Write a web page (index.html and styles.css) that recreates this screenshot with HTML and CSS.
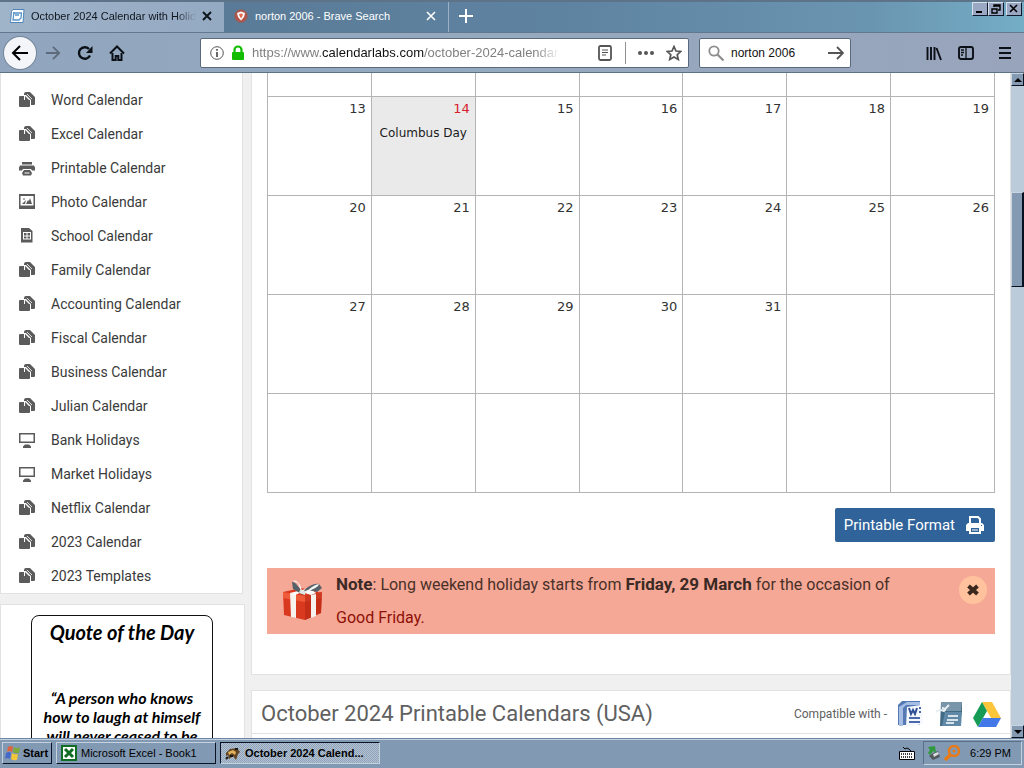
FILE: index.html
```html
<!DOCTYPE html>
<html lang="en">
<head>
<meta charset="utf-8">
<meta name="viewport" content="width=device-width, initial-scale=1">
<title>October 2024 Calendar with Holidays</title>
<link rel="stylesheet" href="styles.css">
</head>
<body>
<svg class="sprites" aria-hidden="true">
  <symbol id="i-copy" viewBox="0 1 16 16"><path fill="#5b5b5b" d="M5 3q0-2 2-2h4l5 5v7q0 1-1 1h-3V9L7 4H5z"/><path fill="#5b5b5b" d="M0 6q0-1 1-1h4v4h6v6q0 1-1 1H1q-1 0-1-1z"/><path fill="#5b5b5b" d="M6 5l4 4H6z"/><path d="M8 3l5 5" stroke="#fff" stroke-width=".8"/></symbol>
  <symbol id="i-print" viewBox="0 0 16 16"><path fill="#5b5b5b" d="M3 2h10v2.500H3zM1 5.500h14l1 2v3h-3L12 9H4l-1 1.500H0v-3z"/><path fill="#5b5b5b" d="M5 10h6l2 3-1 2.500H4L3 13z"/><path fill="#fff" d="M5.500 12.500h5v1h-5z"/></symbol>
  <symbol id="i-photo" viewBox="0 0 16 16"><path fill="#5b5b5b" fill-rule="evenodd" d="M0 0h16v15H0zM1.500 2v9.500h13V2z"/><path fill="#5b5b5b" d="M3 10l4-4-1 4zM7 10l2-4 1 1 1-3 2 6zM4 4.500h2v1H4z"/></symbol>
  <symbol id="i-school" viewBox="0 2 16 16"><path fill="#5b5b5b" fill-rule="evenodd" d="M2 2h8l3.500 3v11.500H2zM4 6v7.500h8V6zM5 7h2.500v2.500H5zM8.500 7H11v2.500H8.500zM5 10.500h2.500v2H5zM8.500 10.500H11v2H8.500z"/></symbol>
  <symbol id="i-screen" viewBox="0 0 16 16"><path fill="#5b5b5b" fill-rule="evenodd" d="M0 1h16v10H0zM1.500 2.500v7h13v-7zM6 12.500h4l2 2V16H4v-1.500z"/></symbol>
</svg>

<header class="browser">
  <div class="tabs">
    <div class="tab tab-active">
      <svg class="s16" viewBox="0 0 16 16"><path d="M4 1.500h11l-1 13H1.500l1-11z" fill="#fff" stroke="#4e84b8"/><path d="M4 5h9M5 4l-1 8h6l2-2 .5-5M6 7h4" fill="none" stroke="#5a93c6" stroke-width="1.300"/></svg>
      <span class="tab-title">October 2024 Calendar with Holidays</span>
      <button class="tab-close" aria-label="Close tab"><svg class="s10" viewBox="0 0 10 10"><path d="M1 1l8 8M9 1L1 9" stroke="currentColor" stroke-width="2"/></svg></button>
    </div>
    <div class="tab tab-back">
      <svg class="s16" viewBox="0 0 16 16"><circle cx="8" cy="8" r="6.500" fill="#b3544b" stroke="#7a6a70"/><path d="M8 3.500l4 1.500-1 4-3 3.500L5 9 4 5z" fill="#fff"/><path d="M8 5.500l2 .5-.8 2.500L8 10.500 6.800 8.500 6 6z" fill="#e56a52"/></svg>
      <span class="tab-title">norton 2006 - Brave Search</span>
      <button class="tab-close" aria-label="Close tab"><svg class="s10" viewBox="0 0 10 10"><path d="M1 1l8 8M9 1L1 9" stroke="currentColor" stroke-width="1.600"/></svg></button>
    </div>
    <button class="new-tab" aria-label="New tab"><svg class="s16" viewBox="0 0 16 16"><path d="M8 1v14M1 8h14" stroke="#fff" stroke-width="2"/></svg></button>
    <div class="window-buttons">
      <button class="win-btn" aria-label="Minimize"><svg class="s10" viewBox="0 0 10 10"><path d="M1 8h6" stroke="#000" stroke-width="2"/></svg></button>
      <button class="win-btn" aria-label="Restore"><svg class="s10" viewBox="0 0 10 10"><path d="M3 3V1h6v5H7M3 2h6M1 5h5v4H1zM1 5h5" fill="none" stroke="#000" stroke-width="1.400"/></svg></button>
      <button class="win-btn win-close" aria-label="Close"><svg class="s10" viewBox="0 0 10 10"><path d="M1 1l7 7M8 1L1 8" stroke="#000" stroke-width="1.600"/></svg></button>
    </div>
  </div>
  <div class="toolbar">
    <button class="nav-btn back" aria-label="Back"><svg class="s18" viewBox="0 0 18 18"><path d="M17 9H2M9 2L2 9l7 7" fill="none" stroke="#000" stroke-width="2"/></svg></button>
    <button class="nav-btn" aria-label="Forward"><svg class="s16" viewBox="0 0 18 18"><path d="M1 9h15M9 2l7 7-7 7" fill="none" stroke="#5d6b7d" stroke-width="2"/></svg></button>
    <button class="nav-btn" aria-label="Reload"><svg class="s16" viewBox="0 0 16 16"><path d="M13 10.500A5.800 5.800 0 1 1 12 4" fill="none" stroke="#0b1017" stroke-width="2.400"/><path d="M15.500 1v7H9z" fill="#0b1017"/></svg></button>
    <button class="nav-btn" aria-label="Home"><svg class="s16" viewBox="0 0 16 16"><path d="M1 8.500l7-7 7 7" fill="none" stroke="#0b1017" stroke-width="2"/><path d="M3.500 8v7h3.200v-4h2.600v4h3.200V8" fill="none" stroke="#0b1017" stroke-width="2"/></svg></button>
    <div class="urlbar">
      <svg class="s16" viewBox="0 0 16 16"><circle cx="8" cy="8" r="6.300" fill="none" stroke="#555"/><path d="M8 7v5M8 4v1.800" stroke="#444" stroke-width="1.600"/></svg>
      <svg class="s16" viewBox="0 0 16 16"><path d="M4.500 8V5a3.500 3.500 0 0 1 7 0v3" fill="none" stroke="#12bc00" stroke-width="2.200"/><rect x="2" y="7" width="12" height="8" rx="1" fill="#12bc00"/></svg>
      <a class="url" href="#">https://www.<span class="domain">calendarlabs.com</span>/october-2024-calendar</a>
      <svg class="s16" viewBox="0 0 16 16"><rect x="2" y="1" width="12" height="14" rx="1.500" fill="none" stroke="#555" stroke-width="1.800"/><path d="M5 5h6M5 7.500h6M5 10h4" stroke="#555"/></svg>
      <span class="url-rule"></span>
      <svg class="s18" viewBox="0 0 18 18"><g fill="#555"><circle cx="3" cy="9" r="2"/><circle cx="9" cy="9" r="2"/><circle cx="15" cy="9" r="2"/></g></svg>
      <svg class="s16" viewBox="0 0 16 16"><path d="M8 1.500l2 4.500 4.800.4-3.600 3.300 1.100 4.800L8 12l-4.300 2.500 1.100-4.800L1.200 6.400 6 6z" fill="none" stroke="#555" stroke-width="1.700"/></svg>
    </div>
    <form class="searchbar">
      <svg class="s16" viewBox="0 0 16 16"><circle cx="6" cy="6" r="4.700" fill="none" stroke="#8d8d8d" stroke-width="1.800"/><path d="M9.500 9.500l6 6" stroke="#8d8d8d" stroke-width="2.200"/></svg>
      <input class="search-input" type="text" aria-label="Search" value="norton 2006">
      <button class="plain" type="button" aria-label="Go"><svg class="s16" viewBox="0 0 16 16"><path d="M0 8h15M9 2l6 6-6 6" fill="none" stroke="#555" stroke-width="1.800"/></svg></button>
    </form>
    <div class="tools">
      <button class="plain" aria-label="Library"><svg class="s16" viewBox="0 0 16 16"><path d="M1.500 2v13M5 2v13M8.500 2v13M10.500 3l4.500 12" stroke="#0b1017" stroke-width="1.900"/></svg></button>
      <button class="plain" aria-label="Sidebars"><svg class="s16" viewBox="0 0 16 16"><rect x="1" y="2" width="14" height="12" rx="2" fill="none" stroke="#0b1017" stroke-width="1.900"/><path d="M8 2v12M3 5h3M3 7.500h3M3 10h2" stroke="#0b1017" stroke-width="1.300"/></svg></button>
      <button class="plain menu-btn" aria-label="Menu"><svg class="s16" viewBox="0 0 16 16"><path d="M2 3h12M2 8h12M2 13h12" stroke="#0b1017" stroke-width="2"/></svg></button>
    </div>
  </div>
</header>

<div class="viewport">
  <div class="page">
    <aside class="sidebar">
      <nav class="card side-nav">
        <a href="#"><svg class="s16"><use href="#i-copy"/></svg>Word Calendar</a>
        <a href="#"><svg class="s16"><use href="#i-copy"/></svg>Excel Calendar</a>
        <a href="#"><svg class="s16"><use href="#i-print"/></svg>Printable Calendar</a>
        <a href="#"><svg class="s16"><use href="#i-photo"/></svg>Photo Calendar</a>
        <a href="#"><svg class="s16"><use href="#i-school"/></svg>School Calendar</a>
        <a href="#"><svg class="s16"><use href="#i-copy"/></svg>Family Calendar</a>
        <a href="#"><svg class="s16"><use href="#i-copy"/></svg>Accounting Calendar</a>
        <a href="#"><svg class="s16"><use href="#i-copy"/></svg>Fiscal Calendar</a>
        <a href="#"><svg class="s16"><use href="#i-copy"/></svg>Business Calendar</a>
        <a href="#"><svg class="s16"><use href="#i-copy"/></svg>Julian Calendar</a>
        <a href="#"><svg class="s16"><use href="#i-screen"/></svg>Bank Holidays</a>
        <a href="#"><svg class="s16"><use href="#i-screen"/></svg>Market Holidays</a>
        <a href="#"><svg class="s16"><use href="#i-copy"/></svg>Netflix Calendar</a>
        <a href="#"><svg class="s16"><use href="#i-copy"/></svg>2023 Calendar</a>
        <a href="#"><svg class="s16"><use href="#i-copy"/></svg>2023 Templates</a>
      </nav>
      <section class="card quote-card">
        <div class="quote">
          <h2>Quote of the Day</h2>
          <p>“A person who knows how to laugh at himself will never ceased to be amused.”</p>
        </div>
      </section>
    </aside>
    <main class="main">
      <section class="card calendar-card">
        <table class="calendar" aria-label="October 2024">
          <tbody>
            <tr class="cut"><td></td><td></td><td></td><td></td><td></td><td></td><td></td></tr>
            <tr><td>13</td><td class="holiday"><span class="red">14</span><div class="event">Columbus Day</div></td><td>15</td><td>16</td><td>17</td><td>18</td><td>19</td></tr>
            <tr><td>20</td><td>21</td><td>22</td><td>23</td><td>24</td><td>25</td><td>26</td></tr>
            <tr><td>27</td><td>28</td><td>29</td><td>30</td><td>31</td><td></td><td></td></tr>
            <tr><td></td><td></td><td></td><td></td><td></td><td></td><td></td></tr>
          </tbody>
        </table>
        <button class="print-btn">Printable Format
          <svg class="s20" viewBox="0 0 20 20"><path d="M5 8V2h8l2 2v4" fill="none" stroke="#fff" stroke-width="2"/><path fill="#fff" fill-rule="evenodd" d="M3 8h14l2 2v6h-3v3H4v-3H1v-6zM6 13v4h8v-4zM16 10v1h1v-1z"/><path d="M7 15h6" stroke="#fff"/></svg>
        </button>
        <div class="note">
          <svg class="gift" viewBox="0 0 42 42"><path d="M1 13l18-4 21 5-1 20-16 7L2 36z" fill="#d93a1f"/><path d="M1 13l22 4 17-4v6l-17 4L1 19z" fill="#ef5b38"/><path d="M23 17v24l16-7 1-21z" fill="#b82814" opacity=".65"/><path d="M8 14l6 1v24l-5-1zM29 16l5-1v22l-5 2z" fill="#f6f2ee"/><path d="M8 14l20-5 6 5-5 2-9-3-7 3z" fill="#fff"/><path d="M21 13C16 8 14 3 10 3l1 7 10 6zM21 13c4-5 10-9 16-8l3 4-5 4-9-2z" fill="#56616a"/><path d="M20 12C19 6 15 0 11 2l5 2 4 11zM23 13c5-3 8-7 14-8-1 4-6 4-12 9z" fill="#f4f6f6"/><path d="M18 11l6 1-1 4-6-2z" fill="#dfe3df"/></svg>
          <p><b>Note</b>: Long weekend holiday starts from <b>Friday, 29 March</b> for the occasion of <a href="#">Good Friday.</a></p>
          <button class="note-close" aria-label="Dismiss"><svg class="s14" viewBox="0 0 14 14"><path d="M2.500 3l9 8M11.500 3l-9 8" stroke="#3a281f" stroke-width="4"/></svg></button>
        </div>
      </section>
      <section class="card printable-card">
        <div class="printable-head">
          <h1>October 2024 Printable Calendars (USA)</h1>
          <span class="compat">Compatible with -</span>
          <svg class="s28" viewBox="0 0 28 28"><path d="M5 1h18v24H1V5z" fill="#5479b5"/><path d="M5 5l5-3h13v3H9L6 8v18H2V7z" fill="#a6bee3"/><path d="M10 7l14-2 2 19-17 3z" fill="#f5f8fc"/><path d="M12 8l2 6 2-4 2 4 2-6" fill="none" stroke="#314f96" stroke-width="2"/><path d="M12 18h11M12 22h11M22 8h2M22 12h2" fill="none" stroke="#4a68ab" stroke-width="2"/></svg>
          <svg class="s28" viewBox="0 0 28 28"><path d="M6 2h21v10l-3 14H5z" fill="#416b86"/><path d="M6 2h21l-1 9H6z" fill="#7895a9"/><path d="M10 12h17l-1 14H7z" fill="#5f89a7"/><path d="M1 12c3-3 5-2 8-1 1-3 3-4 5-6M7 8c2 0 3 1 3 3" fill="none" stroke="#e7edf0" stroke-width="2"/><path d="M13 16h10M12 20h11M11 23h8" stroke="#fff" stroke-width="1.500"/></svg>
          <svg class="s28" viewBox="0 0 28 28"><path d="M9 2h10l9 16H18z" fill="#fcc53a"/><path d="M9 2l5 9L5 27l-5-9z" fill="#169b57"/><path d="M10 18h18l-5 9H5z" fill="#4378e8"/></svg>
        </div>
      </section>
    </main>
  </div>
  <div class="scrollbar">
    <button class="scroll-btn" aria-label="Scroll up"><svg class="s8" viewBox="0 0 8 8"><path d="M0 6l4-4 4 4z"/></svg></button>
    <div class="track"><div class="thumb"></div></div>
    <button class="scroll-btn" aria-label="Scroll down"><svg class="s8" viewBox="0 0 8 8"><path d="M0 2l4 4 4-4z"/></svg></button>
  </div>
</div>

<footer class="taskbar">
  <button class="task start"><svg class="s16" viewBox="0 0 16 16"><path d="M3 2q3-2 5 0L7 7Q4 5 2 7z" fill="#dc6440"/><path d="M9 2q3 2 6 0l-1 6q-3 1-6-1z" fill="#7daa3b"/><path d="M1 8q3-2 5 0l-1 6q-3-2-5 0z" fill="#4569c9"/><path d="M7 8q3 2 6 1l-1 6q-3 1-6-1z" fill="#f3c838"/></svg>Start</button>
  <button class="task"><svg class="s16" viewBox="0 0 16 16"><path fill="#116c24" d="M0 0h16v16H0z"/><path fill="#fff" d="M2 2h12v12H2z"/><path d="M4 4l8 8M12 4l-8 8" stroke="#116c24" stroke-width="3"/></svg>Microsoft Excel - Book1</button>
  <button class="task task-on"><svg class="s16" viewBox="0 0 16 16"><path d="M1 8l4-4 7-1 3 4-2 2-2 6-3-4-4 3-1-4-2 1z" fill="#624322"/><path d="M3 7l5-2 3 2-1 3-3-2-3 2z" fill="#dfb25e"/><path d="M10 4h3M5 11h3M3 12l-2 2" stroke="#1b1711" stroke-width="2"/></svg>October 2024 Calend...</button>
  <div class="tray">
    <svg class="s16" viewBox="0 0 16 16"><path d="M4 2l2 2 2-1 2 1 2 2" fill="none" stroke="#000"/><path fill="#fff" stroke="#000" d="M.5 6.500h15v8H.5z"/><path d="M2 9h12M2 12h12" stroke="#000" stroke-width="1.500" stroke-dasharray="1 1"/></svg>
    <div class="clock-box">
      <svg class="s16" viewBox="0 0 16 16"><path d="M7 8l5-2 2 6-7 3-4-4z" fill="#54595c"/><path d="M7 9l5-2 1 2-5 3z" fill="#d9dde0"/><path d="M2 2l7-1 1 7-3-2-3 4-2-2 2-3z" fill="#2f9a3b"/></svg>
      <svg class="s16" viewBox="0 0 16 16"><circle cx="10" cy="6" r="5" fill="none" stroke="#e87b18" stroke-width="2.500"/><circle cx="10" cy="6" r="1.500" fill="#e87b18"/><path d="M6 10l-5 5" stroke="#e87b18" stroke-width="3.500"/></svg>
      <span>6:29 PM</span>
    </div>
  </div>
</footer>
</body>
</html>
```
FILE: styles.css
```css
* { box-sizing: border-box; }

body {
  margin: 0;
  height: 100vh;
  display: flex;
  flex-direction: column;
  overflow: hidden;
  font-family: Roboto, "Liberation Sans", sans-serif;
  color: #3a3a3a;
  background: #f0f0f0;
}

a { color: inherit; text-decoration: none; }
button { font: inherit; color: inherit; padding: 0; border: 0; background: none; display: flex; align-items: center; justify-content: center; }
svg { display: block; flex: none; }
.sprites { position: absolute; width: 0; height: 0; }
.s8 { width: 8px; height: 8px; }
.s10 { width: 10px; height: 10px; }
.s14 { width: 14px; height: 14px; }
.s16 { width: 16px; height: 16px; }
.s18 { width: 18px; height: 18px; }
.s20 { width: 20px; height: 20px; }
.s28 { width: 28px; height: 28px; }

/* Browser chrome */
.browser { flex: none; font-family: "Liberation Sans", sans-serif; font-size: 12px; }
.tabs {
  display: flex;
  height: 32px;
  border-top: 2px solid #5c7388;
  background: linear-gradient(90deg, #587691, #5e83a1 55%, #6a95b0 85%, #74adc6);
}
.tab { display: flex; align-items: center; gap: 6px; width: 224px; padding: 0 12px 2px 9px; }
.tab-active { background: linear-gradient(90deg, #9fb3c9, #94a9c2); color: #10161e; }
.tab-back { color: #fff; width: 225px; border-right: 1px solid #9bb0c3; }
.tab-title {
  flex: 1;
  font-size: 11px;
  overflow: hidden;
  white-space: nowrap;
}
.tab-active .tab-title {
  -webkit-mask-image: linear-gradient(90deg, #000 88%, transparent);
  mask-image: linear-gradient(90deg, #000 88%, transparent);
}
.new-tab { width: 34px; padding-bottom: 2px; }
.window-buttons { display: flex; margin-left: auto; padding-right: 2px; }
.win-btn {
  width: 16px;
  height: 14px;
  background: #9aa8c4;
  border: 1px solid;
  border-color: #d6e2ec #10182c #10182c #d6e2ec;
}
.win-close { margin-left: 2px; }
.toolbar {
  display: flex;
  align-items: center;
  height: 41px;
  padding: 0 8px 0 4px;
  border-top: 1px solid #62788f;
  border-bottom: 1px solid #5d7085;
  background: linear-gradient(90deg, #91a6be, #95a9bf 50%, #98a4bb);
}
.nav-btn { width: 32px; height: 32px; }
.back { border-radius: 50%; background: #f3f5f8; box-shadow: 0 0 0 1px #73869b; margin-right: 1px; }
.urlbar, .searchbar {
  display: flex;
  align-items: center;
  height: 30px;
  background: #fff;
  border: 1px solid #5a6a7c;
  border-radius: 2px;
}
.urlbar { flex: 1; max-width: 489px; margin-left: 67px; padding: 0 6px 0 8px; gap: 5px; }
.url {
  flex: 1;
  min-width: 0;
  margin: 0 32px 0 1px;
  overflow: hidden;
  white-space: nowrap;
  font-size: 13px;
  color: #808080;
  -webkit-mask-image: linear-gradient(90deg, #000 92%, transparent);
  mask-image: linear-gradient(90deg, #000 92%, transparent);
}
.domain { color: #111; }
.url-rule { width: 1px; height: 22px; margin: 0 6px 0 7px; background: #909090; }
.urlbar .s18 { margin-right: 6px; }
.searchbar { width: 152px; margin-left: 10px; padding: 0 6px 0 8px; gap: 7px; }
.search-input { flex: 1; min-width: 0; border: 0; padding: 0; outline: 0; background: none; font: 12px "Liberation Sans", sans-serif; color: #111; }
.tools { display: flex; gap: 16px; margin-left: auto; padding-right: 3px; }
.menu-btn { margin-left: 7px; }

/* Page */
.viewport { flex: 1; min-height: 0; display: flex; background: #f0f0f0; }
.page { flex: 1; min-width: 0; display: flex; gap: 6px; overflow: hidden; }
.card { background: #fff; border: 1px solid #e2e2e2; }
.sidebar { width: 245px; flex: none; }
.side-nav { border-top: 0; padding-top: 10px; margin-right: 2px; }
.side-nav a { display: flex; align-items: center; gap: 16px; height: 34px; padding-left: 18px; font-size: 14px; }
.quote-card { margin-top: 10px; padding: 10px 31px 0 30px; }
.quote {
  height: 180px;
  padding: 4px 8px;
  border: 1px solid #111;
  border-radius: 8px;
  text-align: center;
  font-family: Lato, sans-serif;
  font-style: italic;
  font-weight: 700;
  color: #000;
}
.quote h2 { margin: 0; font-size: 20px; line-height: 24px; }
.quote p { margin: 44px 0 0; font-size: 16px; line-height: 19px; }

.main { flex: 1; min-width: 0; }
.calendar-card { border-top: 0; padding: 0 15px 40px; }
.calendar { width: 100%; border-collapse: collapse; table-layout: fixed; font: 13px/18px "DejaVu Sans", sans-serif; color: #333; }
.calendar td { height: 99px; padding: 3px 5px; border: 1px solid #b4b4b4; text-align: right; vertical-align: top; }
.calendar .cut td { height: 23px; border-top: 0; }
.calendar .holiday { background: #eaeaea; }
.red { color: #d8202a; }
.event { margin-top: 6px; text-align: center; white-space: nowrap; font-size: 12px; color: #1b1b1b; }
.print-btn {
  margin: 15px 0 0 auto;
  height: 34px;
  padding: 0 10px 0 9px;
  gap: 10px;
  border-radius: 2px;
  background: #30639a;
  color: #fff;
  font-size: 15px;
}
.note { display: flex; align-items: flex-start; gap: 12px; margin-top: 26px; padding: 0 8px 0 15px; background: #f5a896; color: #4a3028; font-size: 16px; line-height: 33px; }
.note p { flex: 1; margin: 0; padding-right: 50px; }
.note b { color: #3b2a25; font-size: 17px; }
.note a { color: #8e1006; }
.gift { width: 42px; height: 42px; margin-top: 11px; }
.note-close { width: 28px; height: 28px; margin-top: 8px; border-radius: 50%; background: #ffc29c; }

.printable-card { margin-top: 15px; padding-bottom: 60px; }
.printable-head { display: flex; align-items: center; gap: 10px; height: 43px; padding: 4px 9px 0; border-bottom: 1px solid #e2e2e2; }
.printable-head h1 { margin: 0 auto 0 0; font-size: 22px; font-weight: 400; color: #606060; white-space: nowrap; }
.compat { font-size: 12px; color: #606060; }

.scrollbar { width: 13px; flex: none; display: flex; flex-direction: column; background: #bccbd9; }
.scroll-btn, .thumb { background: #849ab3; border: 1px solid; border-color: #c9d6e1 #07101f #07101f #c9d6e1; }
.scroll-btn { height: 13px; }
.track { flex: 1; padding-top: 106px; }
.thumb { height: 95px; border-right-width: 2px; }

/* Taskbar */
.taskbar {
  flex: none;
  display: flex;
  align-items: center;
  gap: 4px;
  height: 30px;
  padding: 0 2px 1px;
  border-top: 1px solid #6c86a3;
  background: #8299b3;
  box-shadow: inset 0 1px #c4d1df;
  font: 11px "Liberation Sans", sans-serif;
  color: #000;
}
.task {
  justify-content: flex-start;
  gap: 4px;
  width: 160px;
  height: 22px;
  padding: 0 4px;
  white-space: nowrap;
  border: 1px solid;
  border-color: #c4d1df #0a1424 #0a1424 #c4d1df;
}
.start { width: 50px; gap: 2px; padding: 0 2px; font-weight: 700; }
.task-on {
  font-weight: 700;
  border-color: #0a1424 #c4d1df #c4d1df #0a1424;
  background: repeating-conic-gradient(#b6c3d2 0 25%, #8da2b9 0 50%) 0 0 / 2px 2px;
}
.tray { display: flex; align-items: center; gap: 8px; margin-left: auto; }
.clock-box { display: flex; align-items: center; gap: 2px; height: 24px; padding: 0 10px 0 2px; border: 1px solid; border-color: #5a6f88 #c4d1df #c4d1df #5a6f88; }
.clock-box span { margin-left: 8px; }
```
